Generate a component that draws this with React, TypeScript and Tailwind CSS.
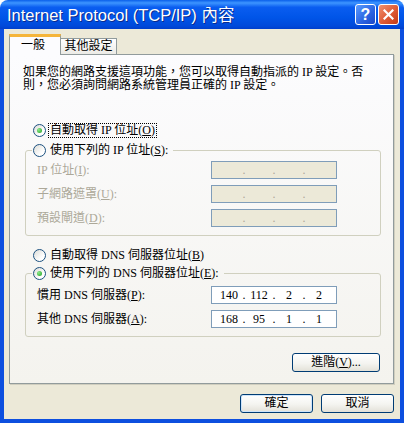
import { Fragment } from "react";

const labelFont = "font-['Liberation_Serif','Noto_Sans_CJK_TC',serif] text-[12px] leading-[13px]";

function Radio({ checked }: { checked?: boolean }) {
  return (
    <span className="flex h-[13px] w-[13px] shrink-0 items-center justify-center rounded-full border border-[#1C5180] bg-[linear-gradient(135deg,#DCDCD7,#FFFFFF_70%)]">
      {checked && (
        <span className="h-[5px] w-[5px] rounded-full bg-[radial-gradient(circle_at_35%_35%,#8CEB8C,#1E9E1E)]" />
      )}
    </span>
  );
}

function RadioRow({
  checked,
  focus,
  children,
}: {
  checked?: boolean;
  focus?: boolean;
  children: React.ReactNode;
}) {
  return (
    <div className="flex h-[16px] items-center">
      <Radio checked={checked} />
      <span
        className={`ml-[2px] border px-[1px] ${focus ? "border-dotted border-black" : "border-transparent"}`}
      >
        {children}
      </span>
    </div>
  );
}

function IpBox({ parts, disabled }: { parts?: string[]; disabled?: boolean }) {
  const fields = parts ?? ["", "", "", ""];
  return (
    <div
      className={`flex h-[18px] w-[126px] items-center border border-[#7F9DB9] pl-[3px] ${
        disabled ? "bg-[#ECE9D8] text-[#ACA899]" : "bg-white text-black"
      }`}
    >
      {fields.map((p, i) => (
        <Fragment key={i}>
          {i > 0 && <span className="flex w-[2px] justify-center">.</span>}
          <span className="w-[28px] text-center">{p}</span>
        </Fragment>
      ))}
    </div>
  );
}

function Field({
  label,
  disabled,
  parts,
}: {
  label: React.ReactNode;
  disabled?: boolean;
  parts?: string[];
}) {
  return (
    <div className="flex items-center">
      <span className={`ml-[5px] w-[174px] ${disabled ? "text-[#ACA899]" : "text-black"}`}>{label}</span>
      <IpBox parts={parts} disabled={disabled} />
    </div>
  );
}

function XpButton({ children, primary, w }: { children: React.ReactNode; primary?: boolean; w: string }) {
  return (
    <button
      className={`flex h-[19px] ${w} items-center justify-center rounded-[3px] border border-[#003C74] bg-[linear-gradient(to_bottom,#FFFFFF,#F4F4F0_55%,#E3E1D8)] text-black ${
        primary ? "shadow-[inset_0_0_0_1px_#CDE4FB]" : ""
      }`}
    >
      {children}
    </button>
  );
}

export default function App() {
  return (
    <div className={`flex h-[423px] w-[404px] flex-col ${labelFont}`}>
      {/* title bar */}
      <div className="flex h-[29px] items-center rounded-t-[8px] bg-[linear-gradient(to_bottom,#0A5FEA_0%,#3D95FF_10%,#0A5DF0_25%,#0055E8_60%,#0049DA_90%,#003FCC_100%)] pl-[7px] pr-[5px]">
        <span className="flex-1 font-['Liberation_Sans','Noto_Sans_CJK_TC',sans-serif] text-[16.5px] leading-[20px] text-white [text-shadow:1px_1px_0_#0B2A8C]">
          Internet Protocol (TCP/IP) 內容
        </span>
        <div className="flex gap-[2px]">
          <div className="flex h-[21px] w-[21px] items-center justify-center rounded-[3px] border border-white bg-[linear-gradient(135deg,#5A9BFF,#2A62E0_60%,#1B47C8)] font-['Liberation_Sans',sans-serif] text-[16px] font-bold leading-none text-white">
            ?
          </div>
          <div className="flex h-[21px] w-[21px] items-center justify-center rounded-[3px] border border-white bg-[linear-gradient(135deg,#F0916F,#DE5A35_55%,#C23A16)]">
            <svg width="11" height="11" viewBox="0 0 11 11">
              <path d="M1.5 1.5 L9.5 9.5 M9.5 1.5 L1.5 9.5" stroke="white" strokeWidth="2.2" strokeLinecap="square" />
            </svg>
          </div>
        </div>
      </div>

      {/* body */}
      <div className="flex flex-1 flex-col border-x-4 border-b-4 border-[#0D4FDF] bg-[#ECE9D8] pt-[5px]">
        {/* tabs */}
        <div className="flex h-[20px] items-end pl-[5px]">
          <div className="relative z-10 -mb-px flex h-[21px] w-[52px] items-center border-x border-t-[3px] border-x-[#919B9C] border-t-[#F5B53A] bg-[#FCFCFE] pl-[11px] pb-[1px]">
            一般
          </div>
          <div className="flex h-[16px] w-[56px] items-center justify-center border-r border-t border-[#919B9C] bg-[linear-gradient(to_bottom,#FFFFFF,#ECEBE6)]">
            其他設定
          </div>
        </div>

        {/* panel */}
        <div className="ml-[5px] flex h-[330px] w-[385px] flex-col border border-[#919B9C] bg-[linear-gradient(to_bottom,#FCFCFE,#F4F3EE)] shadow-[1px_1px_0_#D0CEBF]">
          <p className="ml-[13px] mt-[11px]">
            如果您的網路支援這項功能，您可以取得自動指派的 IP 設定。否
            <br />
            則，您必須詢問網路系統管理員正確的 IP 設定。
          </p>

          <div className="ml-[23px] mt-[30px]">
            <RadioRow checked focus>
              自動取得 IP 位址(<u>O</u>)
            </RadioRow>
          </div>

          <fieldset className="ml-[15px] mt-[4px] w-[356px] rounded-[3px] border border-[#D0D0BF] pl-[6px]">
            <legend className="px-[1px] pr-[3px]">
              <RadioRow>
                使用下列的 IP 位址(<u>S</u>):
              </RadioRow>
            </legend>
            <div className="mt-[3px] flex flex-col gap-[6px] pb-[8px]">
              <Field disabled label={<>IP 位址(<u>I</u>):</>} />
              <Field disabled label={<>子網路遮罩(<u>U</u>):</>} />
              <Field disabled label={<>預設閘道(<u>D</u>):</>} />
            </div>
          </fieldset>

          <div className="ml-[23px] mt-[11px]">
            <RadioRow>
              自動取得 DNS 伺服器位址(<u>B</u>)
            </RadioRow>
          </div>

          <fieldset className="ml-[15px] mt-[2px] w-[356px] rounded-[3px] border border-[#D0D0BF] pl-[6px]">
            <legend className="px-[1px] pr-[3px]">
              <RadioRow checked>
                使用下列的 DNS 伺服器位址(<u>E</u>):
              </RadioRow>
            </legend>
            <div className="mt-[5px] flex flex-col gap-[6px] pb-[8px]">
              <Field label={<>慣用 DNS 伺服器(<u>P</u>):</>} parts={["140", "112", "2", "2"]} />
              <Field label={<>其他 DNS 伺服器(<u>A</u>):</>} parts={["168", "95", "1", "1"]} />
            </div>
          </fieldset>

          <div className="mt-[16px] flex justify-end pr-[13px]">
            <XpButton w="w-[88px]">
              進階(<u>V</u>)...
            </XpButton>
          </div>
        </div>

        {/* footer */}
        <div className="mt-[10px] flex justify-end gap-[8px] pr-[6px]">
          <XpButton primary w="w-[73px]">
            確定
          </XpButton>
          <XpButton w="w-[73px]">取消</XpButton>
        </div>
      </div>
    </div>
  );
}
